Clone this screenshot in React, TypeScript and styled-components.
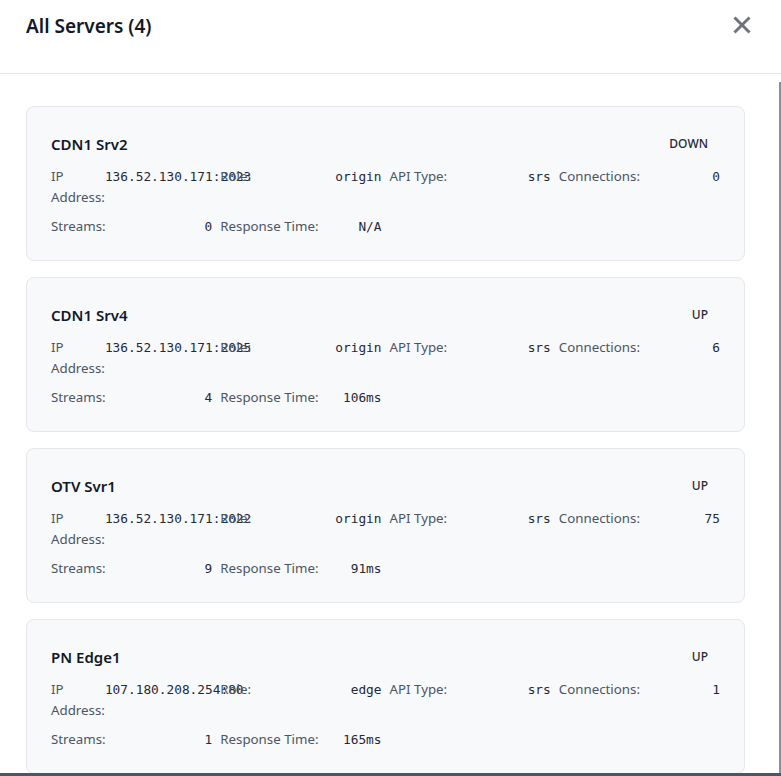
import React from "react";
import styled, { createGlobalStyle } from "styled-components";

const Global = createGlobalStyle`
  html, body { margin: 0; padding: 0; background: #4b5563; }
  body { font-family: "Noto Sans", "Open Sans", sans-serif; }
  * { box-sizing: border-box; }
`;

const Modal = styled.div`
  width: 781px;
  height: 773px;
  background: #ffffff;
  display: flex;
  flex-direction: column;
  overflow: hidden;
`;

const Header = styled.header`
  display: flex;
  justify-content: space-between;
  align-items: flex-start;
  padding: 12px 26px 33px 26px;
  border-bottom: 1px solid #e5e7eb;
  flex: none;
`;

const Title = styled.h2`
  margin: 0;
  font-size: 19px;
  line-height: 28px;
  font-weight: 600;
  color: #111827;
`;

const CloseButton = styled.button`
  border: none;
  background: transparent;
  padding: 0;
  margin: 0;
  width: 26px;
  height: 26px;
  display: flex;
  align-items: center;
  justify-content: center;
  color: #6b7280;
  cursor: pointer;
`;

const Body = styled.div`
  flex: 1;
  overflow: hidden;
  margin-top: 8px;
  padding: 24px 34px 40px 26px;
  display: flex;
  flex-direction: column;
  gap: 16px;
  border-right: 2px solid #8b8f96;
`;

const Card = styled.section`
  flex: none;
  background: #f8f9fb;
  border: 1px solid #e5e7eb;
  border-radius: 8px;
  padding: 25px 24px 23px;
`;

const CardHead = styled.div`
  display: flex;
  justify-content: space-between;
  align-items: center;
  height: 24px;
  margin-bottom: 10px;
`;

const Name = styled.h3`
  margin: 0;
  font-size: 15px;
  line-height: 24px;
  font-weight: 600;
  color: #111827;
`;

const Status = styled.span`
  padding: 2px 12px;
  font-size: 12px;
  line-height: 16px;
  font-weight: 500;
  color: #1f2937;
`;

const Grid = styled.div`
  display: grid;
  grid-template-columns: repeat(4, minmax(0, 1fr));
  column-gap: 8px;
  row-gap: 8px;
`;

const Cell = styled.div`
  display: flex;
  justify-content: space-between;
  align-items: flex-start;
  min-width: 0;
`;

const Label = styled.span`
  font-size: 13.3px;
  line-height: 21px;
  color: #4b5563;
`;

const Value = styled.span`
  font-family: "DejaVu Sans Mono", "Liberation Mono", monospace;
  font-size: 12.8px;
  line-height: 21px;
  color: #1f2937;
  white-space: nowrap;
`;

type Server = {
  name: string;
  status: string;
  ip: string;
  role: string;
  api: string;
  connections: number;
  streams: number;
  response: string;
};

const servers: Server[] = [
  { name: "CDN1 Srv2", status: "DOWN", ip: "136.52.130.171:2023", role: "origin", api: "srs", connections: 0, streams: 0, response: "N/A" },
  { name: "CDN1 Srv4", status: "UP", ip: "136.52.130.171:2025", role: "origin", api: "srs", connections: 6, streams: 4, response: "106ms" },
  { name: "OTV Svr1", status: "UP", ip: "136.52.130.171:2022", role: "origin", api: "srs", connections: 75, streams: 9, response: "91ms" },
  { name: "PN Edge1", status: "UP", ip: "107.180.208.254:80", role: "edge", api: "srs", connections: 1, streams: 1, response: "165ms" },
];

const Field = ({ label, value }: { label: string; value: React.ReactNode }) => (
  <Cell>
    <Label>{label}</Label>
    <Value>{value}</Value>
  </Cell>
);

export default function App() {
  return (
    <>
      <Global />
      <Modal>
        <Header>
          <Title>All Servers (4)</Title>
          <CloseButton aria-label="Close">
            <svg width="26" height="26" viewBox="0 0 24 24" fill="none" stroke="currentColor" strokeWidth="2.7" strokeLinecap="square">
              <path d="M18 6 6 18" />
              <path d="m6 6 12 12" />
            </svg>
          </CloseButton>
        </Header>
        <Body>
          {servers.map((s) => (
            <Card key={s.name}>
              <CardHead>
                <Name>{s.name}</Name>
                <Status>{s.status}</Status>
              </CardHead>
              <Grid>
                <Field label="IP Address:" value={s.ip} />
                <Field label="Role:" value={s.role} />
                <Field label="API Type:" value={s.api} />
                <Field label="Connections:" value={s.connections} />
                <Field label="Streams:" value={s.streams} />
                <Field label="Response Time:" value={s.response} />
              </Grid>
            </Card>
          ))}
        </Body>
      </Modal>
    </>
  );
}
